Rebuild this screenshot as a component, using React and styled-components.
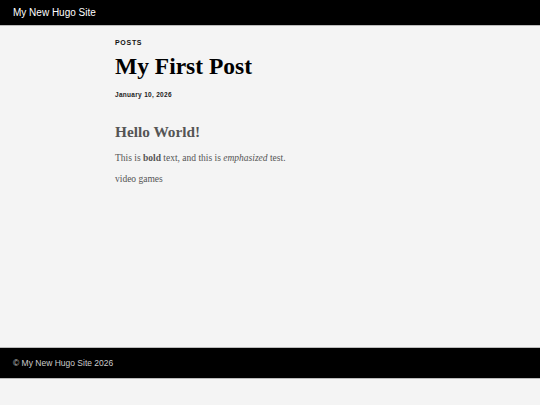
import React from "react";
import styled, { createGlobalStyle } from "styled-components";

const GlobalStyle = createGlobalStyle`
  html, body {
    margin: 0;
    padding: 0;
    background: #f4f4f4;
  }
`;

const Page = styled.div`
  display: flex;
  flex-direction: column;
  font-family: "Liberation Sans", Arial, sans-serif;
`;

const Header = styled.header`
  background: #000;
  height: 25px;
  display: flex;
  align-items: center;
  padding: 0 13px;
  border-bottom: 1px solid #bbb;
`;

const SiteTitle = styled.a`
  color: #fff;
  font-size: 10px;
  text-decoration: none;
`;

const Main = styled.main`
  height: 321px;
  padding: 13px 0 0 115px;
  box-sizing: border-box;
`;

const Section = styled.div`
  font-size: 7px;
  font-weight: bold;
  letter-spacing: 0.7px;
  text-transform: uppercase;
  color: #111;
`;

const Title = styled.h1`
  margin: 5px 0 0;
  font-family: "Liberation Serif", Georgia, serif;
  font-size: 23.5px;
  line-height: 30px;
  color: #000;
`;

const PostDate = styled.time`
  display: block;
  margin-top: 10px;
  font-size: 6.5px;
  font-weight: bold;
  letter-spacing: 0.3px;
  color: #222;
`;

const Content = styled.div`
  margin-top: 24px;
  font-family: "Liberation Serif", Georgia, serif;
  color: #555;
`;

const Heading = styled.h2`
  margin: 0 0 11px;
  font-size: 15.3px;
  line-height: 20px;
`;

const Para = styled.p`
  margin: 0 0 11px;
  font-size: 9.5px;
  line-height: 10px;
`;

const Footer = styled.footer`
  background: #000;
  height: 30px;
  display: flex;
  align-items: center;
  padding: 0 13px;
  border-top: 1px solid #bbb;
  border-bottom: 1px solid #bbb;
`;

const Copy = styled.span`
  color: #ccc;
  font-size: 8.5px;
`;

export default function App() {
  return (
    <Page>
      <GlobalStyle />
      <Header>
        <SiteTitle href="#">My New Hugo Site</SiteTitle>
      </Header>
      <Main>
        <Section>Posts</Section>
        <Title>My First Post</Title>
        <PostDate>January 10, 2026</PostDate>
        <Content>
          <Heading>Hello World!</Heading>
          <Para>
            This is <b>bold</b> text, and this is <em>emphasized</em> test.
          </Para>
          <Para>video games</Para>
        </Content>
      </Main>
      <Footer>
        <Copy>© My New Hugo Site 2026</Copy>
      </Footer>
    </Page>
  );
}
